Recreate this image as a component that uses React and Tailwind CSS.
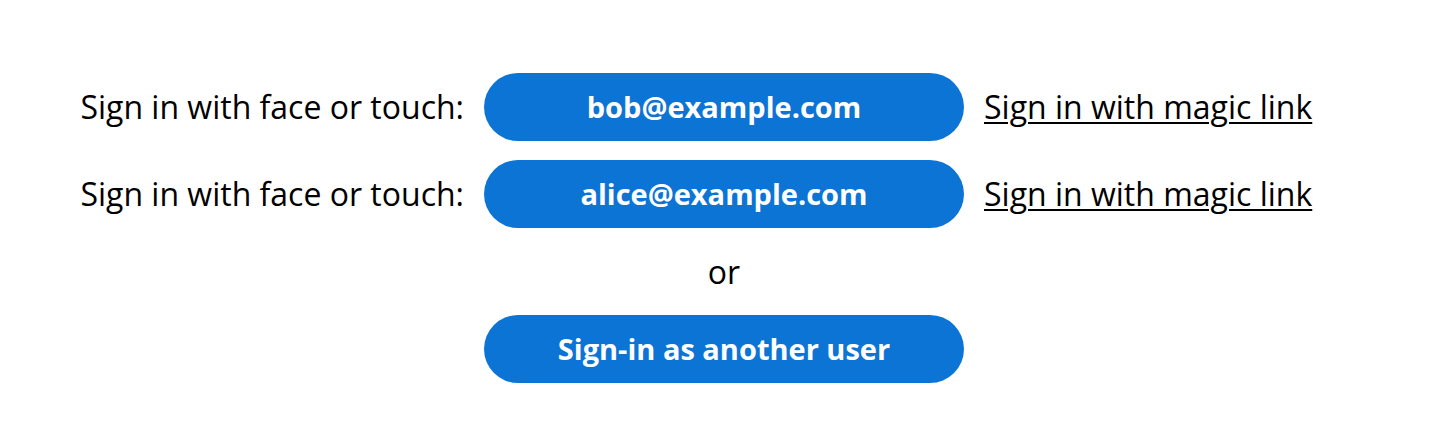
export default function App() {
  const users = ["bob@example.com", "alice@example.com"];
  return (
    <div className="w-[1440px] h-[448px] bg-white pl-[8px] pt-[73px] text-black" style={{ fontFamily: '"Open Sans", sans-serif' }}>
      <div className="grid grid-cols-[1fr_480px_1fr] gap-x-5 gap-y-[19px] items-center">
        {users.map((u) => (
          <>
            <div key={u + "l"} className="text-right text-[32px] leading-none">Sign in with face or touch:</div>
            <button key={u + "b"} className="h-[68px] w-[480px] rounded-full bg-[#0c74d4] text-white font-bold text-[29px]">{u}</button>
            <a key={u + "a"} href="#" className="text-[32px] leading-none underline underline-offset-[3px] decoration-[2px]">Sign in with magic link</a>
          </>
        ))}
        <div></div>
        <div className="h-[49px] flex items-center justify-center text-[32px]">or</div>
        <div></div>
        <div></div>
        <button className="h-[68px] w-[480px] rounded-full bg-[#0c74d4] text-white font-bold text-[29px]">Sign-in as another user</button>
        <div></div>
      </div>
    </div>
  );
}
